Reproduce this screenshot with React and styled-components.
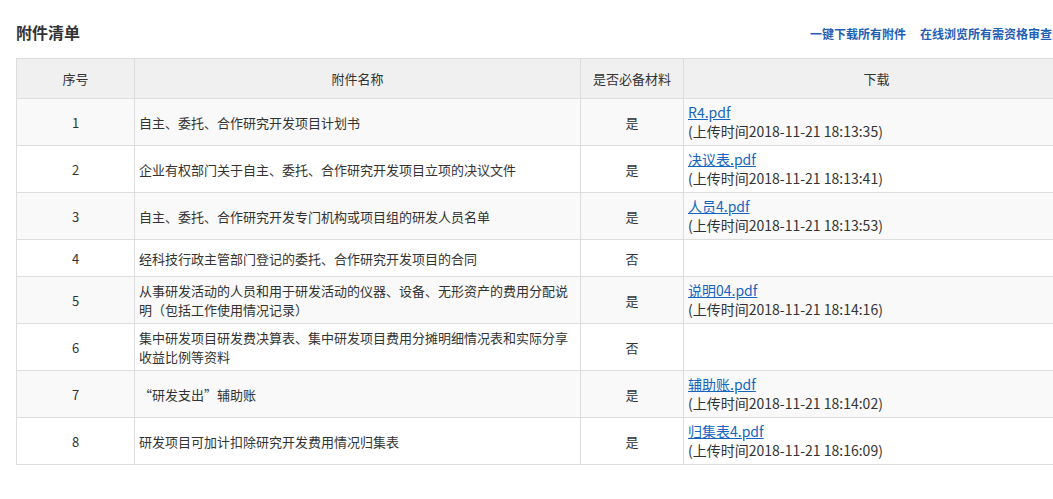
import styled, { createGlobalStyle } from "styled-components";

const Global = createGlobalStyle`
  body {
    margin: 0;
    background: #fff;
    overflow: hidden;
    font-family: "Microsoft YaHei", "Noto Sans CJK SC", "Liberation Sans", sans-serif;
    color: #333;
  }
`;

const Page = styled.div`
  width: 1080px;
  padding: 0 0 0 16px;
`;

const Head = styled.div`
  display: flex;
  align-items: center;
  justify-content: space-between;
  height: 58px;
  padding-right: 8px;
  box-sizing: border-box;
  padding-top: 6px;
`;

const Title = styled.h2`
  margin: 0;
  font-size: 16px;
  font-weight: bold;
  color: #333;
`;

const Links = styled.div`
  display: flex;
  gap: 14px;
  padding-top: 2px;
`;

const TopLink = styled.a`
  font-size: 12px;
  font-weight: bold;
  color: #1f5fb6;
  text-decoration: none;
`;

const Table = styled.table`
  border-collapse: collapse;
  width: 1054px;
  font-size: 13px;
  table-layout: fixed;
`;

const Th = styled.th`
  background: #f0f0f0;
  border: 1px solid #ddd;
  height: 39px;
  font-weight: normal;
  color: #333;
  padding: 0;
`;

const Tr = styled.tr`
  background: ${(p) => (p.$odd ? "#f9f9f9" : "#fff")};
`;

const Td = styled.td`
  border: 1px solid #ddd;
  height: ${(p) => (p.$short ? "36px" : "46px")};
  padding: ${(p) => (p.$left ? "0 12px 0 4px" : "0 4px")};
  text-align: ${(p) => (p.$left ? "left" : "center")};
  line-height: 19px;
  vertical-align: middle;
`;

const File = styled.a`
  color: #1565c0;
  text-decoration: underline;
  font-size: 14px;
  font-family: "Microsoft YaHei", "Noto Sans CJK SC", "Open Sans", sans-serif;
`;

const Time = styled.div`
  font-size: 14px;
`;

const rows = [
  ["自主、委托、合作研究开发项目计划书", "是", "R4.pdf", "2018-11-21 18:13:35"],
  ["企业有权部门关于自主、委托、合作研究开发项目立项的决议文件", "是", "决议表.pdf", "2018-11-21 18:13:41"],
  ["自主、委托、合作研究开发专门机构或项目组的研发人员名单", "是", "人员4.pdf", "2018-11-21 18:13:53"],
  ["经科技行政主管部门登记的委托、合作研究开发项目的合同", "否"],
  ["从事研发活动的人员和用于研发活动的仪器、设备、无形资产的费用分配说明（包括工作使用情况记录）", "是", "说明04.pdf", "2018-11-21 18:14:16"],
  ["集中研发项目研发费决算表、集中研发项目费用分摊明细情况表和实际分享收益比例等资料", "否"],
  ["“研发支出”辅助账", "是", "辅助账.pdf", "2018-11-21 18:14:02"],
  ["研发项目可加计扣除研究开发费用情况归集表", "是", "归集表4.pdf", "2018-11-21 18:16:09"],
];

export default function App() {
  return (
    <Page>
      <Global />
      <Head>
        <Title>附件清单</Title>
        <Links>
          <TopLink href="#">一键下载所有附件</TopLink>
          <TopLink href="#">在线浏览所有需资格审查的附件</TopLink>
        </Links>
      </Head>
      <Table>
        <colgroup>
          <col style={{ width: 118 }} />
          <col style={{ width: 446 }} />
          <col style={{ width: 103 }} />
          <col />
        </colgroup>
        <thead>
          <tr>
            <Th>序号</Th>
            <Th>附件名称</Th>
            <Th>是否必备材料</Th>
            <Th>下载</Th>
          </tr>
        </thead>
        <tbody>
          {rows.map(([name, req, file, time], i) => (
            <Tr key={i} $odd={i % 2 === 0}>
              <Td $short={i === 3}>{i + 1}</Td>
              <Td $left $short={i === 3}>{name}</Td>
              <Td $short={i === 3}>{req}</Td>
              <Td $left $short={i === 3}>
                {file && (
                  <>
                    <File href="#">{file}</File>
                    <Time>(上传时间{time})</Time>
                  </>
                )}
              </Td>
            </Tr>
          ))}
        </tbody>
      </Table>
    </Page>
  );
}
